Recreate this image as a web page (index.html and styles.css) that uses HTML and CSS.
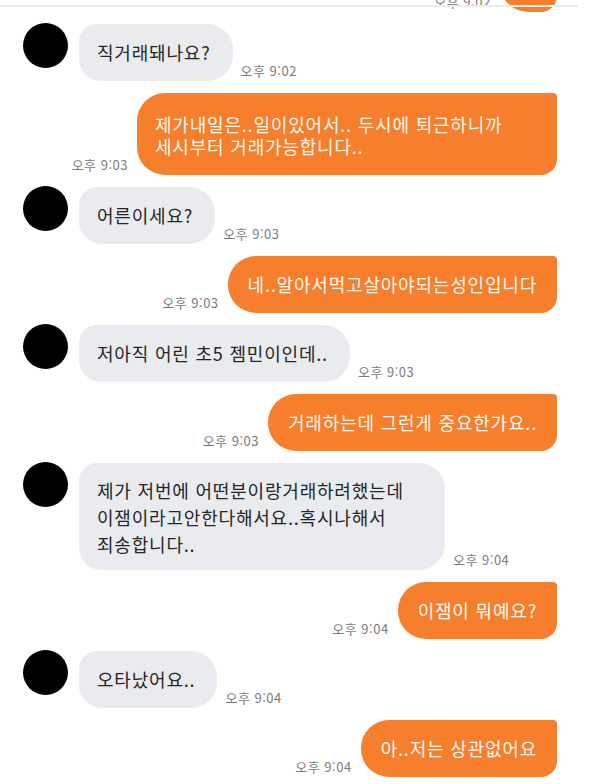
FILE: index.html
```html
<!DOCTYPE html>
<html lang="ko">
<head>
<meta charset="utf-8">
<title>대화</title>
<link rel="stylesheet" href="styles.css">
</head>
<body>
<div class="chat">
  <div class="row out cut">
    <span class="time">오후 9:02</span>
    <div class="bubble out">네</div>
  </div>

  <div class="row in">
    <div class="avatar"></div>
    <div class="bubble in">직거래돼나요?</div>
    <span class="time">오후 9:02</span>
  </div>

  <div class="row out">
    <span class="time">오후 9:03</span>
    <div class="bubble out two">제가내일은..일이있어서.. 두시에 퇴근하니까<br>세시부터 거래가능합니다..</div>
  </div>

  <div class="row in">
    <div class="avatar"></div>
    <div class="bubble in">어른이세요?</div>
    <span class="time">오후 9:03</span>
  </div>

  <div class="row out">
    <span class="time">오후 9:03</span>
    <div class="bubble out">네..알아서먹고살아야되는성인입니다</div>
  </div>

  <div class="row in">
    <div class="avatar"></div>
    <div class="bubble in">저아직 어린 초5 젬민이인데..</div>
    <span class="time">오후 9:03</span>
  </div>

  <div class="row out">
    <span class="time">오후 9:03</span>
    <div class="bubble out">거래하는데 그런게 중요한가요..</div>
  </div>

  <div class="row in">
    <div class="avatar"></div>
    <div class="bubble in three">제가 저번에 어떤분이랑거래하려했는데<br>이잼이라고안한다해서요..혹시나해서<br>죄송합니다..</div>
    <span class="time">오후 9:04</span>
  </div>

  <div class="row out">
    <span class="time">오후 9:04</span>
    <div class="bubble out">이잼이 뭐예요?</div>
  </div>

  <div class="row in">
    <div class="avatar"></div>
    <div class="bubble in">오타났어요..</div>
    <span class="time">오후 9:04</span>
  </div>

  <div class="row out">
    <span class="time">오후 9:04</span>
    <div class="bubble out">아..저는 상관없어요</div>
  </div>
</div>
</body>
</html>
```

FILE: styles.css
```css
* { box-sizing: border-box; }
html, body { margin: 0; padding: 0; background: #ffffff; }
body {
  font-family: "Noto Sans CJK KR", "Noto Sans", sans-serif;
  height: 784px;
  overflow: hidden;
}
.chat {
  position: relative;
  display: flex;
  flex-direction: column;
  gap: 12px;
  padding: 0 51px 0 23px;
}
.chat::before {
  content: "";
  position: absolute;
  left: 0;
  top: 5px;
  width: 578px;
  height: 2px;
  background: #ececec;
  z-index: 2;
}
.row { display: flex; align-items: flex-end; }
.row.in { justify-content: flex-start; }
.row.out { justify-content: flex-end; }
.row.cut { margin-top: -45px; }

.avatar {
  width: 45px;
  height: 45px;
  border-radius: 50%;
  background: #000;
  align-self: flex-start;
  margin-top: -1px;
  margin-right: 11px;
  flex: none;
}
.bubble {
  font-size: 18px;
  line-height: 23px;
  letter-spacing: 0.8px;
  padding: 17px 22px 17px 18px;
  white-space: nowrap;
}
.bubble.in {
  background: #e9ebef;
  color: #262626;
  border-radius: 18px 26px 26px 22px;
}
.bubble.out {
  background: #f67f2d;
  color: #fff8ef;
  border-radius: 28px 4px 16px 28px;
  padding: 17px 20px;
}
.bubble.two { width: 420px; line-height: 22px; padding: 20px 20px 18px 18px; }
.bubble.three { width: 366px; line-height: 27px; padding: 14px 20px 12px 18px; }

.time {
  font-size: 13px;
  line-height: 14px;
  letter-spacing: 0.5px;
  color: #7a7a7a;
  white-space: nowrap;
  margin-bottom: 3px;
}
.row.in .time { margin-left: 8px; }
.row.out .time { margin-right: 9px; }
```
